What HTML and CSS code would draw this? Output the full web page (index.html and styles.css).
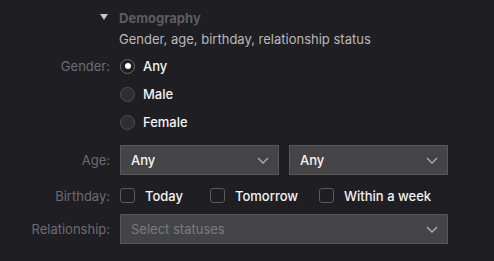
FILE: index.html
```html
<!DOCTYPE html>
<html>
<head>
<meta charset="utf-8">
<link rel="stylesheet" href="styles.css">
</head>
<body>
<div class="panel">
  <div class="header">
    <span class="disclosure"></span>
    <div class="titles">
      <div class="title">Demography</div>
      <div class="subtitle">Gender, age, birthday, relationship status</div>
    </div>
  </div>
  <div class="form">
    <div class="label label-gender">Gender:</div>
    <div class="radios">
      <label class="radio-row"><span class="radio checked"></span><span class="opt">Any</span></label>
      <label class="radio-row"><span class="radio"></span><span class="opt">Male</span></label>
      <label class="radio-row"><span class="radio"></span><span class="opt">Female</span></label>
    </div>

    <div class="label label-age">Age:</div>
    <div class="age-row">
      <div class="select"><span class="value">Any</span><svg class="chev" width="12" height="7" viewBox="0 0 12 7"><path d="M1 1 L6 6 L11 1" fill="none" stroke="#a8a8aa" stroke-width="1.5"/></svg></div>
      <div class="select"><span class="value">Any</span><svg class="chev" width="12" height="7" viewBox="0 0 12 7"><path d="M1 1 L6 6 L11 1" fill="none" stroke="#a8a8aa" stroke-width="1.5"/></svg></div>
    </div>

    <div class="label label-birthday">Birthday:</div>
    <div class="checks">
      <label class="check-row"><span class="checkbox"></span><span class="opt">Today</span></label>
      <label class="check-row"><span class="checkbox"></span><span class="opt">Tomorrow</span></label>
      <label class="check-row"><span class="checkbox"></span><span class="opt">Within a week</span></label>
    </div>

    <div class="label">Relationship:</div>
    <div class="select wide"><span class="placeholder">Select statuses</span><svg class="chev" width="12" height="7" viewBox="0 0 12 7"><path d="M1 1 L6 6 L11 1" fill="none" stroke="#a8a8aa" stroke-width="1.5"/></svg></div>
  </div>
</div>
</body>
</html>
```
FILE: styles.css
```css
html, body {
  margin: 0;
  padding: 0;
  background: #1f1e23;
  height: 100%;
}
body {
  font-family: Inter, "Noto Sans", sans-serif;
  font-size: 13px;
  color: #f2f2f2;
}
.panel {
  padding-top: 9px;
}
.header {
  display: flex;
  align-items: flex-start;
  padding-left: 100px;
}
.disclosure {
  width: 0;
  height: 0;
  border-left: 4px solid transparent;
  border-right: 4px solid transparent;
  border-top: 6px solid #c9c9c9;
  margin-top: 5px;
  margin-right: 11px;
}
.title {
  font-weight: 700;
  color: #5d5d61;
  line-height: 18px;
}
.subtitle {
  color: #b9b9bb;
  line-height: 26px;
  margin-top: -1px;
}
.form {
  display: grid;
  grid-template-columns: 110px 328px;
  column-gap: 10px;
  margin-top: 0;
  align-items: center;
}
.label {
  text-align: right;
  color: #6c6c70;
}
.label-gender {
  align-self: start;
  line-height: 28px;
}
.label-age {
  margin-top: 9px;
}
.label-birthday {
  margin-top: 2px;
}
.radios {
  display: flex;
  flex-direction: column;
}
.radio-row {
  display: flex;
  align-items: center;
  height: 28px;
}
.radio {
  box-sizing: border-box;
  width: 15px;
  height: 15px;
  border-radius: 50%;
  border: 1px solid #505054;
  background: #2e2e31;
  margin-right: 8px;
  position: relative;
}
.radio.checked {
  border-color: #6a6a6e;
  background: #1f1e23;
}
.radio.checked::after {
  content: "";
  position: absolute;
  left: 3.5px;
  top: 3.5px;
  width: 6px;
  height: 6px;
  border-radius: 50%;
  background: #ffffff;
}
.opt {
  font-weight: 500;
}
.age-row {
  display: flex;
  gap: 10px;
  margin-top: 9px;
}
.select {
  box-sizing: border-box;
  height: 30px;
  border: 1px solid #58585b;
  background: #444446;
  display: flex;
  align-items: center;
  justify-content: space-between;
  padding: 0 9px 0 10px;
  flex: 1;
}
.value {
  font-weight: 500;
  color: #f5f5f5;
}
.placeholder {
  color: #7b7b7e;
}
.checks {
  display: flex;
  height: 37px;
  padding-top: 2px;
  align-items: center;
}
.check-row {
  display: flex;
  align-items: center;
}
.check-row:nth-child(1) { width: 90px; }
.check-row:nth-child(2) { width: 109px; }
.checkbox {
  box-sizing: border-box;
  width: 15px;
  height: 15px;
  border-radius: 3px;
  border: 1px solid #5b5b5e;
  background: #1f1e23;
  margin-right: 10px;
}
.select.wide {
  height: 30px;
}
```
